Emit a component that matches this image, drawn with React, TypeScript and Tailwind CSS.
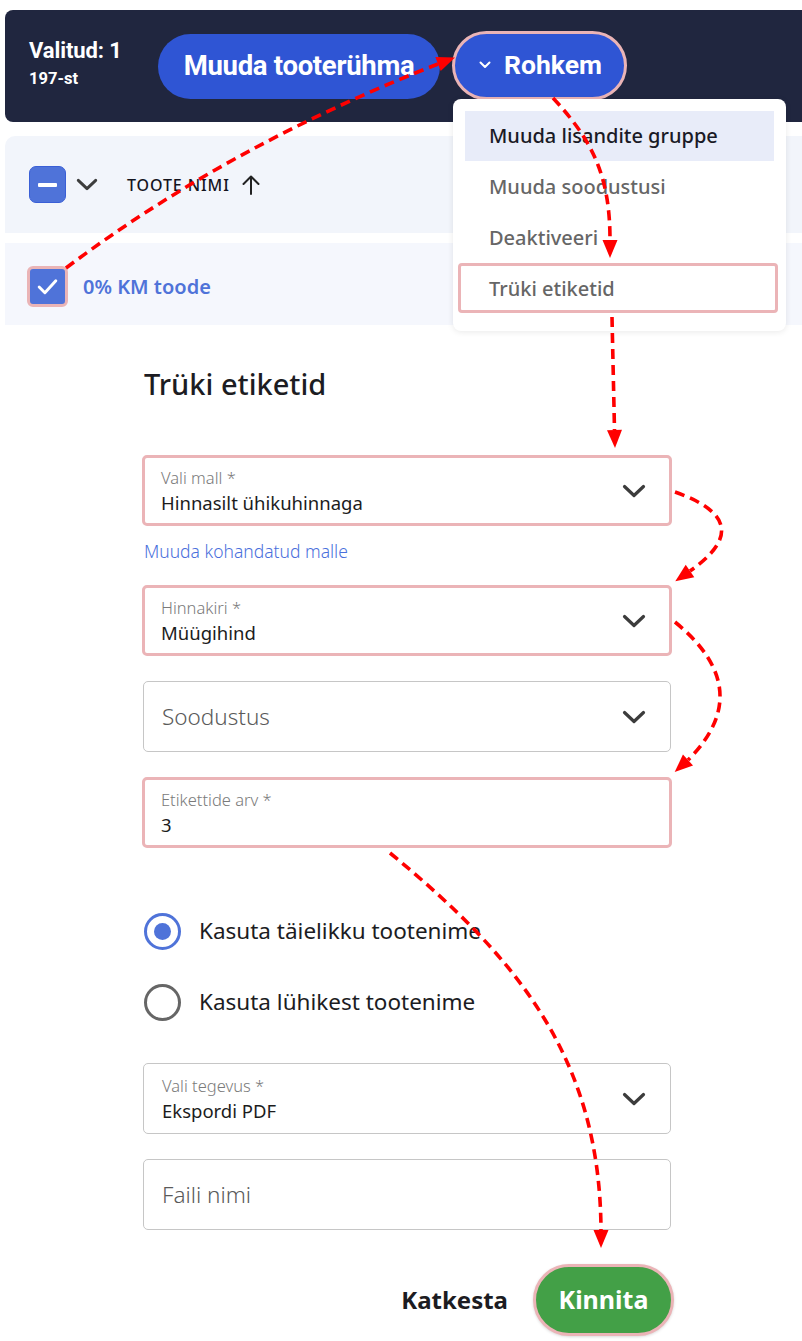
import React from "react";

function arrowHead(tx: number, ty: number, bx: number, by: number, hw = 7.5) {
  const dx = tx - bx;
  const dy = ty - by;
  const l = Math.hypot(dx, dy) || 1;
  const px = -dy / l;
  const py = dx / l;
  return `${tx},${ty} ${bx + px * hw},${by + py * hw} ${bx - px * hw},${by - py * hw}`;
}

const arrows: { d: string; tip: [number, number]; base: [number, number] }[] = [
  { d: "M66,268 Q230,145 438,64", tip: [455, 57.5], base: [438, 64] },
  { d: "M553,98 C592,140 610,175 610,240", tip: [610, 258], base: [610, 240] },
  { d: "M612,317 L614.5,430", tip: [615, 448], base: [614.5, 430] },
  { d: "M675,492 Q760,522 690,571", tip: [675.3, 581.3], base: [690, 571] },
  { d: "M675,622 Q758,690 688,760", tip: [674.7, 772.1], base: [688, 760] },
  { d: "M390,853 C520,960 600,1060 601,1230", tip: [601, 1248], base: [601, 1230] },
];

function Chevron({ className = "" }: { className?: string }) {
  return (
    <svg viewBox="0 0 24 14" className={className} fill="none" stroke="currentColor" strokeWidth={3.2} strokeLinecap="round" strokeLinejoin="round">
      <path d="M2.5 2.5 L12 11.5 L21.5 2.5" />
    </svg>
  );
}

function Field({
  label,
  value,
  placeholder,
  hl,
  chevron,
}: {
  label?: string;
  value?: string;
  placeholder?: string;
  hl?: boolean;
  chevron?: boolean;
}) {
  return (
    <div
      className={`h-[71px] rounded-[5px] flex items-center bg-white ${
        hl ? "border-[3px] border-[#ebb4b7] pl-[16px] pr-[23px] -mx-[1px]" : "border border-[#c6c6c6] pl-[18px] pr-[24px]"
      }`}
    >
      <div className="flex-1 min-w-0">
        {label && <div className="text-[16.5px] leading-[19px] text-[#7a7a7a] font-light">{label}</div>}
        {value && <div className="text-[18.5px] leading-[22px] text-[#1c1c1c] mt-[5px]">{value}</div>}
        {placeholder && <div className="text-[22.5px] leading-[26px] text-[#5a5a5a] font-light">{placeholder}</div>}
      </div>
      {chevron && <Chevron className="w-[24px] h-[14px] text-[#3c3c3c]" />}
    </div>
  );
}

export default function App() {
  return (
    <div className="relative w-[802px] h-[1341px] overflow-hidden bg-white font-['Noto_Sans',sans-serif] text-[#1c1c24]">
      {/* header bar */}
      <div className="pt-[10px] pl-[5px]">
        <div className="h-[112px] bg-[#20263f] rounded-l-[8px] flex items-center pl-[24px] font-['Roboto',sans-serif]">
          <div className="w-[129px] text-white font-bold -mt-[7px]">
            <div className="text-[22px] leading-[26px] tracking-[-0.1px]">Valitud: 1</div>
            <div className="text-[16.5px] leading-[18px] mt-[6px]">197-st</div>
          </div>
          <div className="h-[65px] w-[282px] rounded-full bg-[#2f55d4] flex items-center justify-center text-white text-[27.5px] font-bold tracking-[-0.3px]">
            Muuda tooterühma
          </div>
          <div className="ml-[12px] h-[69px] w-[175px] rounded-full border-[3px] border-[#eab4b6] bg-[#2f55d4] flex items-center pl-[24px] text-white text-[26.5px] font-bold -mt-[2px]">
            <svg viewBox="0 0 12 8" className="w-[12px] h-[8px] mr-[13px]" fill="none" stroke="currentColor" strokeWidth={2} strokeLinecap="round" strokeLinejoin="round">
              <path d="M1.5 1.5 L6 6 L10.5 1.5" />
            </svg>
            Rohkem
          </div>
        </div>
      </div>

      {/* table header */}
      <div className="mt-[14px] ml-[5px] h-[97px] bg-[#f2f5fb] rounded-tl-[10px] flex items-center pl-[24px]">
        <div className="w-[37px] h-[37px] rounded-[7px] bg-[#4f73d9] border border-[#3a5fd6] flex items-center justify-center">
          <div className="w-[19px] h-[4px] bg-white rounded-[1px]" />
        </div>
        <Chevron className="ml-[10px] w-[22px] h-[13px] text-[#3d3d3d]" />
        <div className="ml-[29px] text-[16px] leading-[20px] tracking-[0.9px] text-[#14141e] font-medium">TOOTE NIMI</div>
        <svg viewBox="0 0 20 22" className="ml-[11px] w-[20px] h-[22px] text-[#222]" fill="none" stroke="currentColor" strokeWidth={2} strokeLinecap="round" strokeLinejoin="round">
          <path d="M10 20 V2.5 M2.5 10 L10 2.5 L17.5 10" />
        </svg>
      </div>

      {/* row */}
      <div className="mt-[10px] ml-[5px] h-[82px] bg-[#f5f7fd] flex items-center pl-[22px] pt-[5px]">
        <div className="w-[41px] h-[41px] rounded-[6px] border-[3px] border-[#eab4b6] bg-[#4f73d9] flex items-center justify-center">
          <svg viewBox="0 0 24 24" className="w-[25px] h-[25px]" fill="none" stroke="white" strokeWidth={2.8} strokeLinecap="round" strokeLinejoin="round">
            <path d="M4 12.5 L9.5 18 L20 6.5" />
          </svg>
        </div>
        <div className="ml-[15px] text-[20px] font-semibold text-[#4f73d9]">0% KM toode</div>
      </div>

      {/* dropdown menu */}
      <div className="absolute left-[453px] top-[99px] w-[333px] h-[232px] bg-white rounded-[8px] shadow-[0_1px_6px_rgba(0,0,0,0.09)] pt-[12px] px-[12px] text-[20px] font-medium">
        <div className="h-[50px] bg-[#e8ecf9] flex items-center pl-[24px] text-[#1a1a26]">Muuda lisandite gruppe</div>
        <div className="h-[51px] flex items-center pl-[24px] text-[#666]">Muuda soodustusi</div>
        <div className="h-[51px] flex items-center pl-[24px] text-[#666]">Deaktiveeri</div>
        <div className="relative h-[51px] flex items-center pl-[24px] text-[#666]">
          Trüki etiketid
          <div className="absolute left-[-7px] right-[-4px] top-0 bottom-[1px] border-[3px] border-[#ebb4b7] rounded-[4px]" />
        </div>
      </div>

      {/* form */}
      <div className="ml-[143px] w-[528px]">
        <h1 className="mt-[42px] pl-[1px] text-[29px] leading-[34px] font-medium text-[#1c1c22]">Trüki etiketid</h1>
        <div className="mt-[54px]">
          <Field hl label="Vali mall *" value="Hinnasilt ühikuhinnaga" chevron />
        </div>
        <div className="mt-[14px] pl-[1px] text-[17.5px] leading-[22px] text-[#4a6fdc] font-light">Muuda kohandatud malle</div>
        <div className="mt-[23px]">
          <Field hl label="Hinnakiri *" value="Müügihind" chevron />
        </div>
        <div className="mt-[25px]">
          <Field placeholder="Soodustus" chevron />
        </div>
        <div className="mt-[25px]">
          <Field hl label="Etikettide arv *" value="3" />
        </div>

        <div className="mt-[63px] flex items-center h-[40px]">
          <div className="ml-[1px] w-[37px] h-[37px] rounded-full border-[3px] border-[#4f73d9] flex items-center justify-center">
            <div className="w-[17px] h-[17px] rounded-full bg-[#4f73d9]" />
          </div>
          <div className="ml-[18px] text-[22.5px] text-[#1c1c22]">Kasuta täielikku tootenime</div>
        </div>
        <div className="mt-[31px] flex items-center h-[40px]">
          <div className="ml-[1px] w-[37px] h-[37px] rounded-full border-[3px] border-[#666]" />
          <div className="ml-[18px] text-[22.5px] text-[#1c1c22]">Kasuta lühikest tootenime</div>
        </div>

        <div className="mt-[41px]">
          <Field label="Vali tegevus *" value="Ekspordi PDF" chevron />
        </div>
        <div className="mt-[25px]">
          <Field placeholder="Faili nimi" />
        </div>

        <div className="mt-[34px] -mr-[3px] flex items-center justify-end">
          <div className="text-[24px] font-bold text-[#1c1c22]">Katkesta</div>
          <div className="ml-[25px] w-[141px] h-[72px] rounded-full border-[3px] border-[#ebb4b7] bg-[#43a047] flex items-center justify-center text-white text-[25px] font-bold shadow-[0_1px_3px_rgba(0,0,0,0.15)]">
            Kinnita
          </div>
        </div>
      </div>

      {/* annotation arrows */}
      <svg className="absolute inset-0 w-[802px] h-[1341px] pointer-events-none" viewBox="0 0 802 1341">
        {arrows.map((a, i) => (
          <g key={i}>
            <path d={a.d} fill="none" stroke="#ff0000" strokeWidth={3.6} strokeDasharray="10 6" />
            <polygon points={arrowHead(a.tip[0], a.tip[1], a.base[0], a.base[1])} fill="#ff0000" />
          </g>
        ))}
      </svg>
    </div>
  );
}
